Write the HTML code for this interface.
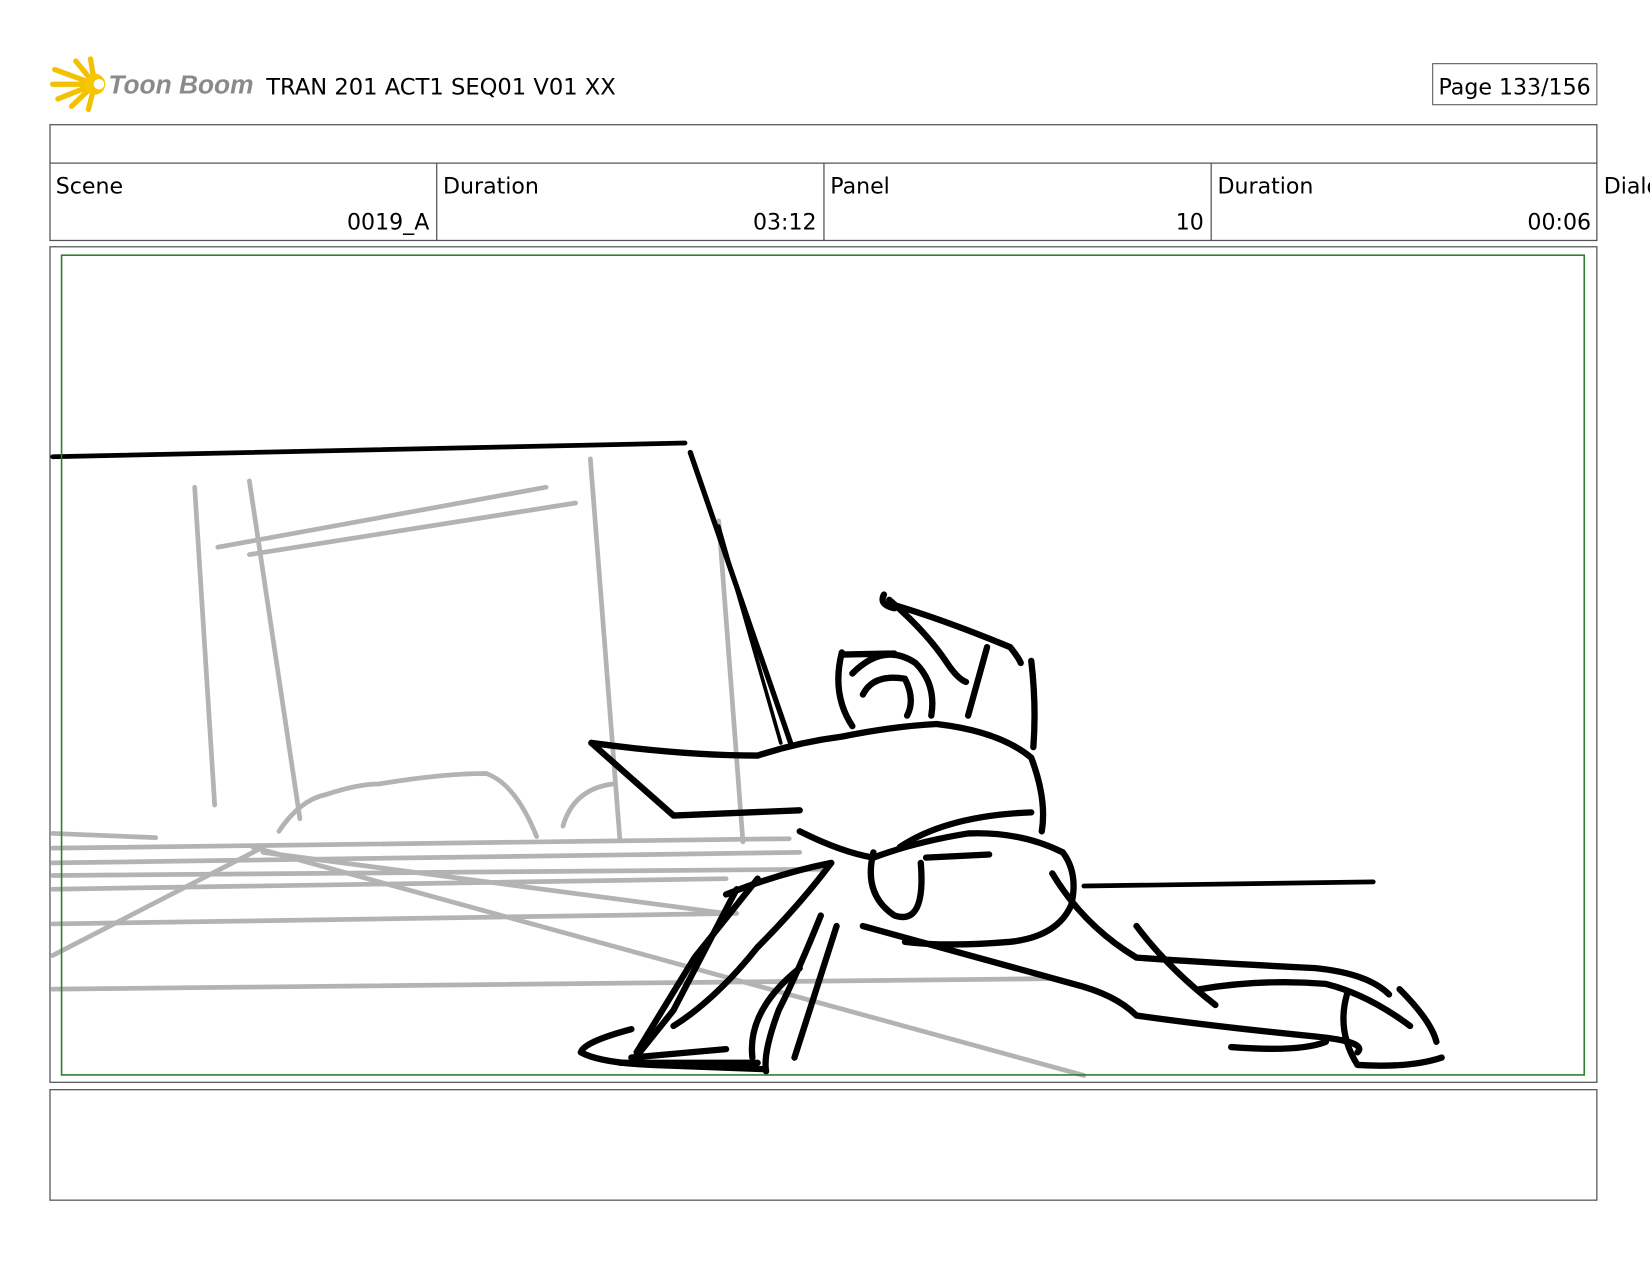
<!DOCTYPE html>
<html><head><meta charset="utf-8"><style>
html,body{margin:0;padding:0;background:#fff;overflow:hidden}
svg{display:block}
text{font-family:"DejaVu Sans","Liberation Sans",sans-serif;fill:#000}
</style></head><body>
<svg width="1650" height="1275" viewBox="0 0 1568 1211.6" xmlns="http://www.w3.org/2000/svg">
<rect width="1568" height="1212" fill="#fff"/>
<!-- logo -->
<g stroke="#f2c200" stroke-width="5" stroke-linecap="round">
<line x1="90" y1="80" x2="52" y2="66"/><line x1="90" y1="80" x2="50" y2="80"/><line x1="90" y1="80" x2="55" y2="94"/>
<line x1="90" y1="80" x2="72" y2="58"/><line x1="90" y1="80" x2="68" y2="101"/><line x1="90" y1="80" x2="86" y2="56"/><line x1="90" y1="80" x2="84" y2="104"/>
</g>
<circle cx="90" cy="80" r="10" fill="#f7c600"/><circle cx="94" cy="80" r="5" fill="#fff"/>
<text x="103" y="89" font-size="25" font-style="italic" font-weight="bold" style="fill:#8a8a8a;font-family:'Liberation Sans',sans-serif">Toon Boom</text>
<text x="253" y="90" font-size="21.5">TRAN 201 ACT1 SEQ01 V01 XX</text>
<rect x="1361.5" y="60.5" width="156" height="39" fill="none" stroke="#555" stroke-width="1"/>
<text x="1367" y="90" font-size="21">Page 133/156</text>
<!-- table -->
<g fill="none" stroke="#555" stroke-width="1.2">
<rect x="47.5" y="118.5" width="1470" height="110"/>
<line x1="47" y1="155" x2="1518" y2="155"/>
<line x1="415" y1="155" x2="415" y2="229"/><line x1="783" y1="155" x2="783" y2="229"/><line x1="1151" y1="155" x2="1151" y2="229"/>
<rect x="47.5" y="234.5" width="1470" height="794"/>
<rect x="47.5" y="1035.5" width="1470" height="105"/>
</g>
<g font-size="21">
<text x="53" y="184">Scene</text><text x="408" y="218" text-anchor="end">0019_A</text>
<text x="421" y="184">Duration</text><text x="776" y="218" text-anchor="end">03:12</text>
<text x="789" y="184">Panel</text><text x="1144" y="218" text-anchor="end">10</text>
<text x="1157" y="184">Duration</text><text x="1512" y="218" text-anchor="end">00:06</text>
<text x="1524" y="184">Dialog</text>
</g>
<!-- gray background -->
<g stroke="#b3b3b3" stroke-width="4.5" fill="none" stroke-linecap="round">
<line x1="185" y1="463" x2="204" y2="765"/><line x1="237" y1="457" x2="285" y2="778"/>
<line x1="561" y1="436" x2="589" y2="797"/><line x1="683" y1="495" x2="706" y2="800"/>
<line x1="207" y1="520" x2="519" y2="463"/><line x1="237" y1="527" x2="547" y2="478"/>
<line x1="50" y1="792" x2="148" y2="796"/>
<line x1="50" y1="806" x2="750" y2="797"/><line x1="50" y1="820" x2="760" y2="810"/>
<line x1="50" y1="832" x2="780" y2="826"/><line x1="50" y1="845" x2="690" y2="835"/>
<line x1="50" y1="878" x2="700" y2="868"/><line x1="50" y1="940" x2="1000" y2="930"/>
<line x1="50" y1="908" x2="250" y2="805"/><line x1="240" y1="805" x2="1030" y2="1022"/>
<line x1="250" y1="810" x2="690" y2="868"/>
<path d="M265 790 Q285 760 310 755 Q340 745 360 745 Q420 735 462 735 Q490 745 510 795"/>
<path d="M535 785 Q545 750 582 745"/>
</g>
<!-- black sketch -->
<g stroke="#000" fill="none" stroke-linecap="round" stroke-linejoin="round">
<line x1="50" y1="434" x2="651" y2="421" stroke-width="4.5"/>
<line x1="656" y1="430" x2="752" y2="708" stroke-width="5"/>
<line x1="683" y1="500" x2="742" y2="706" stroke-width="3.5"/>
<line x1="1030" y1="842" x2="1305" y2="838" stroke-width="4.5"/>
<g stroke-width="6">
<path d="M562 706 Q650 718 720 718 Q760 705 800 700 Q850 690 890 688 Q950 695 980 720 Q995 760 990 790"/>
<path d="M562 706 L640 775 L760 770"/>
<path d="M800 620 Q790 660 810 690 M810 640 Q840 610 870 630 Q890 650 885 680 M820 660 Q830 640 860 645 Q870 665 862 680"/>
<path d="M800 622 L850 621"/>
<path d="M845 570 Q880 600 900 630 Q910 645 918 648 M850 575 Q900 590 960 615 Q968 625 970 630"/>
<path d="M840 565 Q835 575 850 578"/>
<path d="M938 615 L920 680 M980 628 Q985 670 982 710"/>
<path d="M760 790 Q800 810 830 815 Q870 800 920 792 Q970 790 1010 810 Q1025 830 1018 860 Q1005 890 960 895 Q900 900 860 895"/>
<path d="M855 805 Q900 775 980 772 M880 815 L940 812"/>
<path d="M830 810 Q820 850 850 870 Q880 880 875 820"/>
<path d="M690 850 Q740 830 790 820 Q760 860 720 900 Q680 950 640 975"/>
<path d="M720 835 L660 910 L605 1000"/>
<path d="M700 845 L640 960 L600 1010"/>
<path d="M780 870 Q760 920 740 960 Q725 1000 728 1018"/>
<path d="M795 880 L755 1005 M760 920 Q710 960 715 1005"/>
<path d="M600 978 Q555 990 552 1000 Q570 1010 620 1012 L725 1016"/>
<path d="M600 1005 L690 997 M590 1010 L720 1010"/>
<path d="M820 880 Q930 910 1020 935 Q1060 945 1080 965 Q1150 975 1250 985 Q1300 990 1290 1000"/>
<path d="M1000 830 Q1030 880 1080 910 Q1150 915 1250 920 Q1300 925 1320 945"/>
<path d="M1080 880 Q1110 920 1155 955 M1140 940 Q1200 930 1260 935 Q1300 945 1340 975"/>
<path d="M1280 945 Q1270 980 1290 1012 Q1340 1015 1370 1005 M1330 940 Q1360 970 1365 990"/>
<path d="M1260 990 Q1235 1000 1170 995"/>
</g>
</g>
<!-- green frame -->
<rect x="58.5" y="242.5" width="1447" height="779" fill="none" stroke="#2e7d2e" stroke-width="1.5"/>
</svg>
</body></html>
